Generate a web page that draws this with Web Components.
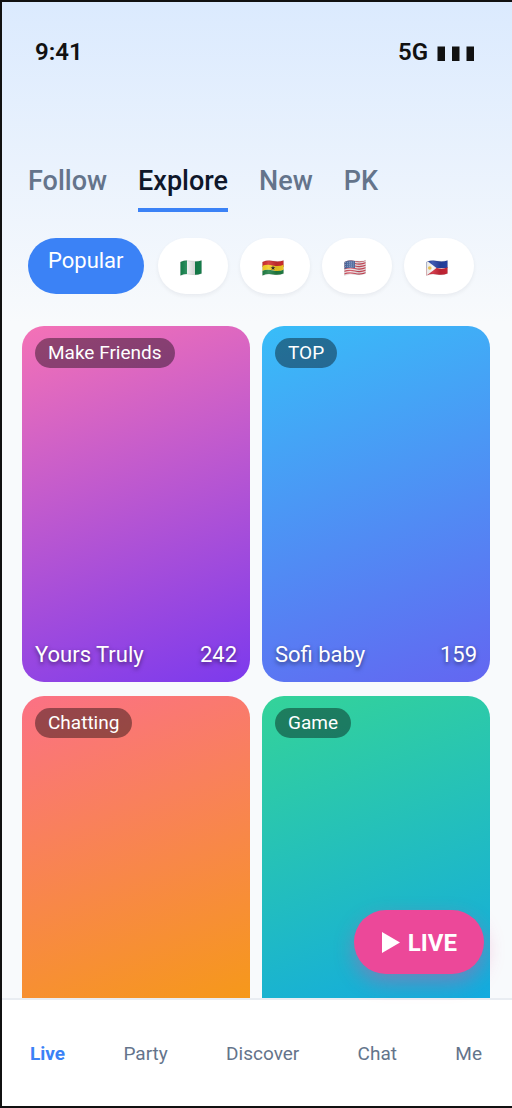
<!DOCTYPE html>
<html lang="en">
<head>
<meta charset="utf-8">
<meta name="viewport" content="width=device-width, initial-scale=1">
<title>Live</title>
<style>
html, body { height: 100%; margin: 0; }
body { font-family: Roboto, "Liberation Sans", sans-serif; color: #0f172a; background: #f8fafc; }
</style>
</head>
<body>
<live-app></live-app>
<script>
const define = (name, html, setup) => {
  const template = document.createElement("template");
  template.innerHTML = html;
  customElements.define(name, class extends HTMLElement {
    constructor() {
      super();
      this.attachShadow({ mode: "open" }).append(template.content.cloneNode(true));
    }
    connectedCallback() { if (setup) setup(this, this.shadowRoot); }
  });
};

define("status-bar", `
<style>
:host { display: flex; justify-content: space-between; align-items: center; padding: 36px 37px 0 33px; height: 28px; font-size: 24px; line-height: 28px; font-weight: 600; color: #111; }
.net { display: flex; align-items: center; gap: 9px; }
svg { display: block; margin-top: 4px; }
</style>
<span>9:41</span>
<span class="net"><span>5G</span><svg width="38" height="16" viewBox="0 0 38 16" fill="#111" role="img" aria-label="Signal"><path d="M.5 .5H8V15H.5zM15 .5h7.500V15H15zM29.500 .5H37V15h-7.500z"/></svg></span>`);

define("tab-item", `
<style>
:host { display: block; }
button { display: block; margin: 0; padding: 0 0 10px; border: 0; border-bottom: 4px solid transparent; background: none; font: 500 27px/34px Roboto, "Liberation Sans", sans-serif; color: #64748b; cursor: pointer; }
:host([active]) button { color: #0f172a; border-color: #3b82f6; }
</style>
<button type="button"><slot></slot></button>`);

define("tab-bar", `
<style>:host { display: flex; gap: 31px; padding: 98px 26px 0; }</style>
<slot></slot>`);

define("chip-bar", `
<style>:host { display: flex; gap: 12px; padding: 26px 26px 0; }</style>
<slot></slot>`);

define("filter-chip", `
<style>
:host { display: block; }
button { display: flex; justify-content: center; align-items: center; box-sizing: border-box; height: 56px; min-width: 70px; margin: 0; padding: 0 20px 0 16px; border: 0; border-radius: 28px; background: #fff; box-shadow: 0 2px 4px rgba(15, 23, 42, .06); font: 400 22px/28px Roboto, "Liberation Sans", sans-serif; cursor: pointer; }
:host([active]) { margin-right: 2px; }
:host([active]) button { align-items: flex-start; padding: 9px 20px; background: #3b82f6; color: #fff; box-shadow: none; }
</style>
<button type="button"><slot></slot></button>`);

const flags = {
  Nigeria: `<path fill="#f1f3f2" d="M0 0h22v18H0z"/><path fill="#15834d" d="M0 0h7v18H0zM15 0h7v18h-7z"/>`,
  Ghana: `<path fill="#d32f2f" d="M0 0h22v8H0z"/><path fill="#f6cf22" d="M0 7q5-2 11-.5t11-1v5.500q-5 2-11 .5T0 12z"/><path fill="#218044" d="M0 12q5-2 11-.5t11-1V18H0z"/><path fill="#222" d="m11 6.500.6 1.700h1.800L12 9.300l.5 1.800-1.500-1-1.500 1 .5-1.800-1.400-1.100h1.800z"/>`,
  "United States": `<path fill="#f4e9ec" d="M0 0h22v18H0z"/><path fill="none" stroke="#d04b5b" stroke-width="1.250" d="M0 2.500q5-2 11-.5t11-1M0 5q5-2 11-.5t11-1M0 7.500q5-2 11-.5t11-1M0 10q5-2 11-.5t11-1M0 12.500q5-2 11-.5t11-1M0 15q5-2 11-.5t11-1"/><path fill="#49669f" d="M0 0h11v9Q5 8 0 10z"/><path fill="none" stroke="#b9c6de" stroke-width=".7" stroke-dasharray=".8 1.200" d="M1 3.500 10 3M1 5.500 10 5M1 7.500 10 7"/>`,
  Philippines: `<path fill="#2744a8" d="M0 0h22v9H0z"/><path fill="#cf2637" d="M0 9q5-2 11 0t11-1v10H0z"/><path fill="#f7f7f5" d="M0 1l10.500 8L0 17z"/><circle cx="3.800" cy="9" r="1.800" fill="#efc44d"/>`
};
const waves = `M.5 3Q5.500 .8 11 2t10.500-.6v13.200Q16.500 16.600 11 15.400T.5 16.400z`;
define("country-flag", `
<style>:host, svg { display: block; } :host { margin-top: 4px; }</style>
<svg width="22" height="18" viewBox="0 0 22 18" role="img"></svg>`, (host, root) => {
  const name = host.getAttribute("country");
  const svg = root.querySelector("svg");
  svg.setAttribute("aria-label", name);
  svg.innerHTML = `<defs><clipPath id="w"><path d="${waves}"/></clipPath><linearGradient id="s"><stop offset="0" stop-opacity=".05"/><stop offset=".3" stop-color="#fff" stop-opacity=".12"/><stop offset=".65" stop-opacity=".12"/><stop offset="1" stop-opacity=".04"/></linearGradient></defs><g clip-path="url(#w)">${flags[name]}<path fill="url(#s)" d="M0 0h22v18H0z"/></g><path d="${waves}" fill="none" stroke="#000" stroke-opacity=".15" stroke-width=".6"/>`;
});

define("room-grid", `
<style>:host { display: grid; grid-template-columns: 1fr 1fr; gap: 14px 12px; padding: 32px 22px 0 20px; }</style>
<slot></slot>`);

define("room-card", `
<style>
:host { display: flex; flex-direction: column; justify-content: space-between; align-items: flex-start; box-sizing: border-box; height: 356px; padding: 12px 13px; border-radius: 22px; color: #fff; background: linear-gradient(160deg, var(--from), var(--to)); }
.tag { padding: 0 13px; border-radius: 15px; background: rgba(0, 0, 0, .4); font-size: 19px; line-height: 30px; }
.info { display: flex; justify-content: space-between; align-self: stretch; font-size: 22px; line-height: 30px; text-shadow: 0 2px 4px rgba(0, 0, 0, .5); }
</style>
<span class="tag"><slot name="tag"></slot></span>
<span class="info"><slot></slot><slot name="count"></slot></span>`);

define("nav-item", `
<style>
:host { display: block; }
a { display: block; font-size: 19px; line-height: 24px; color: #64748b; text-decoration: none; }
:host([active]) a { color: #3b82f6; font-weight: 700; }
</style>
<a href="#"><slot></slot></a>`);

define("bottom-nav", `
<style>
:host { display: flex; justify-content: space-between; align-items: center; box-sizing: border-box; height: 108px; padding: 2px 30px 0 28px; border-top: 2px solid #e9edf2; background: #fff; }
</style>
<slot></slot>`);

define("live-button", `
<style>
:host { display: block; }
button { display: flex; align-items: center; gap: 7px; height: 64px; margin: 0; padding: 2px 27px 0; border: 0; border-radius: 32px; background: #ec4899; color: #fff; box-shadow: 0 8px 20px rgba(236, 72, 153, .4); font: 700 24px/28px Roboto, "Liberation Sans", sans-serif; cursor: pointer; }
svg { display: block; }
</style>
<button type="button"><svg width="20" height="22" viewBox="0 0 20 22" fill="#fff" aria-hidden="true"><path d="M1 0v21l18-10.500z"/></svg><slot></slot></button>`);

define("live-app", `
<style>
:host { display: flex; flex-direction: column; position: relative; box-sizing: border-box; height: 100vh; overflow: hidden; border: 2px solid #111; border-right: 0; background: linear-gradient(#dbeafe, #f8fafc 320px); }
main { flex: 1; min-height: 0; overflow: hidden; }
live-button { position: absolute; right: 28px; bottom: 132px; }
</style>
<main>
  <status-bar></status-bar>
  <tab-bar><tab-item>Follow</tab-item><tab-item active>Explore</tab-item><tab-item>New</tab-item><tab-item>PK</tab-item></tab-bar>
  <chip-bar>
    <filter-chip active>Popular</filter-chip>
    <filter-chip><country-flag country="Nigeria"></country-flag></filter-chip>
    <filter-chip><country-flag country="Ghana"></country-flag></filter-chip>
    <filter-chip><country-flag country="United States"></country-flag></filter-chip>
    <filter-chip><country-flag country="Philippines"></country-flag></filter-chip>
  </chip-bar>
  <room-grid>
    <room-card style="--from:#f472b6;--to:#7c3aed"><span slot="tag">Make Friends</span>Yours Truly<span slot="count">242</span></room-card>
    <room-card style="--from:#38bdf8;--to:#6366f1"><span slot="tag">TOP</span>Sofi baby<span slot="count">159</span></room-card>
    <room-card style="--from:#fb7185;--to:#f59e0b"><span slot="tag">Chatting</span></room-card>
    <room-card style="--from:#34d399;--to:#0ea5e9"><span slot="tag">Game</span></room-card>
  </room-grid>
</main>
<live-button>LIVE</live-button>
<bottom-nav><nav-item active>Live</nav-item><nav-item>Party</nav-item><nav-item>Discover</nav-item><nav-item>Chat</nav-item><nav-item>Me</nav-item></bottom-nav>`);
</script>
</body>
</html>
